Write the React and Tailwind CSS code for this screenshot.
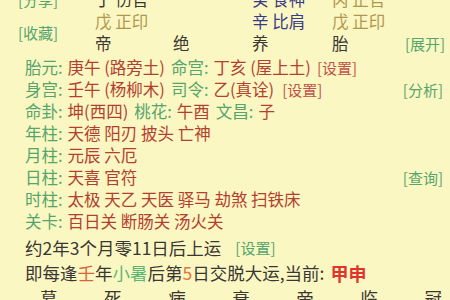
const green = "text-[#55a56c]"
const red = "text-[#b3402f]"

function Row({ label, children, tag }) {
  return (
    <div className="flex h-[22px] items-center">
      <span className={green}>{label}:</span>
      <span className={`ml-[5px] ${red}`}>{children}</span>
      {tag && <span className={`ml-auto pr-[7px] text-[15px] ${green}`}>{tag}</span>}
    </div>
  )
}

export default function App() {
  const pillars = [
    [
      { t: "丁 伤官", c: "text-[#3b3834]" },
      null,
      { t: "癸 食神", c: "text-[#373c86]" },
      { t: "丙 正官", c: "text-[#b0974f]" },
    ],
    [
      { t: "戊 正印", c: "text-[#b0974f]" },
      null,
      { t: "辛 比肩", c: "text-[#373c86]" },
      { t: "戊 正印", c: "text-[#b0974f]" },
    ],
    [
      { t: "帝", c: "text-[#3b3834]" },
      { t: "绝", c: "text-[#3b3834]" },
      { t: "养", c: "text-[#3b3834]" },
      { t: "胎", c: "text-[#3b3834]" },
    ],
  ]

  return (
    <div className="h-[300px] w-[450px] overflow-hidden bg-[#fbf7c3] font-['Noto_Sans_CJK_SC',sans-serif] text-[16.5px] leading-none">
      {/* pillars */}
      <div className="-mt-[12px] flex">
        <div className={`flex w-[95px] flex-col pl-[18px] text-[15px] ${green}`}>
          <span className="flex h-[22px] items-center">[分享]</span>
          <span className="mt-[11px] flex h-[22px] items-center">[收藏]</span>
        </div>
        <div className="grid flex-1 grid-cols-[78px_79px_80px_73px_1fr]">
          {pillars.map((row, i) => (
            <div key={i} className="contents">
              {row.map((cell, j) => (
                <span key={j} className={`flex h-[22px] items-center ${cell ? cell.c : ""}`}>
                  {cell ? cell.t : ""}
                </span>
              ))}
              <span className={`flex h-[22px] items-center text-[15px] ${green}`}>{i === 2 ? "[展开]" : ""}</span>
            </div>
          ))}
        </div>
      </div>

      {/* details */}
      <div className="mt-[2px] pl-[25px]">
        <div className="flex h-[22px] items-center">
          <span className={green}>胎元:</span>
          <span className={`ml-[5px] ${red}`}>庚午 (路旁土)</span>
          <span className={`ml-[6px] ${green}`}>命宫:</span>
          <span className={`ml-[5px] ${red}`}>丁亥 (屋上土)</span>
          <span className="ml-[6px] text-[15px] text-[#c2524a]">[设置]</span>
        </div>
        <div className="flex h-[22px] items-center">
          <span className={green}>身宫:</span>
          <span className={`ml-[5px] ${red}`}>壬午 (杨柳木)</span>
          <span className={`ml-[6px] ${green}`}>司令:</span>
          <span className={`ml-[5px] ${red}`}>乙(真诠)</span>
          <span className="ml-[8px] text-[15px] text-[#c2524a]">[设置]</span>
          <span className={`ml-auto pr-[7px] text-[15px] ${green}`}>[分析]</span>
        </div>
        <div className="flex h-[22px] items-center">
          <span className={green}>命卦:</span>
          <span className={`ml-[5px] ${red}`}>坤(西四)</span>
          <span className={`ml-[6px] ${green}`}>桃花:</span>
          <span className={`ml-[5px] ${red}`}>午酉</span>
          <span className={`ml-[6px] ${green}`}>文昌:</span>
          <span className={`ml-[5px] ${red}`}>子</span>
        </div>
        <Row label="年柱">天德 阳刃 披头 亡神</Row>
        <Row label="月柱">元辰 六厄</Row>
        <Row label="日柱" tag="[查询]">天喜 官符</Row>
        <Row label="时柱">太极 天乙 天医 驿马 劫煞 扫铁床</Row>
        <Row label="关卡">百日关 断肠关 汤火关</Row>

        <div className="mt-[3px] flex h-[25px] items-center text-[17.5px] text-[#3a3733]">
          <span>约2年3个月零11日后上运</span>
          <span className={`ml-[14px] text-[15px] ${green}`}>[设置]</span>
        </div>
        <div className="flex h-[25px] items-center text-[17.5px] text-[#3a3733]">
          <span>即每逢</span>
          <span className="text-[#d8653a]">壬</span>
          <span>年</span>
          <span className="text-[#5cb878]">小暑</span>
          <span>后第</span>
          <span className="text-[#e0783a]">5</span>
          <span>日交脱大运,当前:</span>
          <span className="ml-[6px] text-[18px] font-bold text-[#e0352c]">甲申</span>
        </div>
      </div>
      <div className="flex h-[25px] items-center justify-between pl-[40px] pr-[8px] text-[17.5px] text-[#3a3733]">
        {["墓", "死", "病", "衰", "帝", "临", "冠"].map((c, i) => (
          <span key={i}>{c}</span>
        ))}
      </div>
    </div>
  )
}
